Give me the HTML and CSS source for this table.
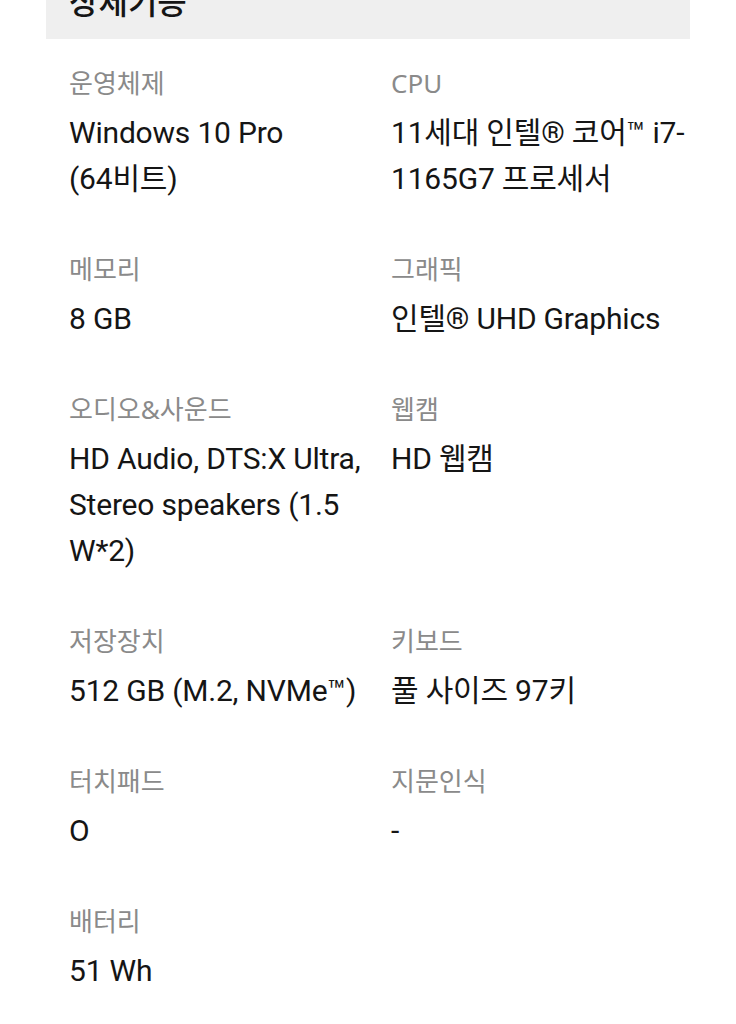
FILE: index.html
```html
<!DOCTYPE html>
<html lang="ko">
<head>
    <meta charset="UTF-8">
    <meta name="viewport" content="width=device-width, initial-scale=1.0">
    <title>상세기능</title>
    <link rel="stylesheet" href="styles.css">
</head>
<body>
    <div class="spec">
        <div class="spec-title">상세기능</div>
        <div class="spec-grid">
            <div class="spec-item">
                <div class="label">운영체제</div>
                <div class="value">Windows 10 Pro (64비트)</div>
            </div>
            <div class="spec-item">
                <div class="label">CPU</div>
                <div class="value">11세대 인텔® 코어™ i7-1165G7 프로세서</div>
            </div>
            <div class="spec-item">
                <div class="label">메모리</div>
                <div class="value">8 GB</div>
            </div>
            <div class="spec-item">
                <div class="label">그래픽</div>
                <div class="value">인텔® UHD Graphics</div>
            </div>
            <div class="spec-item">
                <div class="label">오디오&amp;사운드</div>
                <div class="value">HD Audio, DTS:X Ultra, Stereo speakers (1.5 W*2)</div>
            </div>
            <div class="spec-item">
                <div class="label">웹캠</div>
                <div class="value">HD 웹캠</div>
            </div>
            <div class="spec-item">
                <div class="label">저장장치</div>
                <div class="value">512 GB (M.2, NVMe™)</div>
            </div>
            <div class="spec-item">
                <div class="label">키보드</div>
                <div class="value">풀 사이즈 97키</div>
            </div>
            <div class="spec-item">
                <div class="label">터치패드</div>
                <div class="value">O</div>
            </div>
            <div class="spec-item">
                <div class="label">지문인식</div>
                <div class="value">-</div>
            </div>
            <div class="spec-item">
                <div class="label">배터리</div>
                <div class="value">51 Wh</div>
            </div>
        </div>
    </div>
</body>
</html>
```

FILE: styles.css
```css
body {
    margin: 0;
    background: #fff;
    font-family: Roboto, "Noto Sans CJK KR", sans-serif;
    color: #151515;
}
.spec {
    margin: 0 46px;
}
.spec-title {
    margin-top: -24px;
    background-color: #efefef;
    padding: 0 23px;
    height: 63px;
    font-size: 32px;
    font-weight: 500;
    line-height: 54px;
    color: #151515;
}
.spec-grid {
    display: grid;
    grid-template-columns: 1fr 1fr;
    row-gap: 50px;
    padding-top: 27px;
}
.spec-item {
    padding-left: 23px;
}
.label {
    font-family: "Noto Sans", "Noto Sans CJK KR", sans-serif;
    font-size: 26px;
    line-height: 34px;
    color: #8a8a8a;
    margin-bottom: 10px;
}
.value {
    font-size: 30px;
    line-height: 46px;
    letter-spacing: -0.2px;
    word-break: keep-all;
    color: #151515;
}
```
